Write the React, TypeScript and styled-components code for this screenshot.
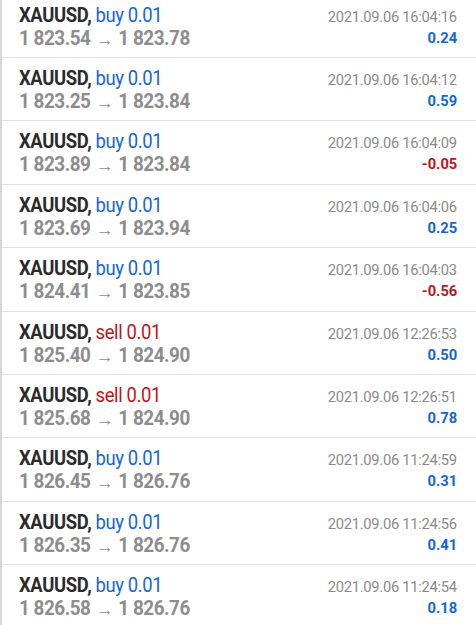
import styled, { createGlobalStyle } from 'styled-components';

const GlobalStyle = createGlobalStyle`
    html, body {
        margin: 0;
        padding: 0;
        background: #ffffff;
        overflow: hidden;
    }
`;

interface Trade {
    side: 'buy' | 'sell';
    open: string;
    close: string;
    time: string;
    profit: string;
}

const trades: Trade[] = [
    { side: 'buy', open: '1 823.54', close: '1 823.78', time: '2021.09.06 16:04:16', profit: '0.24' },
    { side: 'buy', open: '1 823.25', close: '1 823.84', time: '2021.09.06 16:04:12', profit: '0.59' },
    { side: 'buy', open: '1 823.89', close: '1 823.84', time: '2021.09.06 16:04:09', profit: '-0.05' },
    { side: 'buy', open: '1 823.69', close: '1 823.94', time: '2021.09.06 16:04:06', profit: '0.25' },
    { side: 'buy', open: '1 824.41', close: '1 823.85', time: '2021.09.06 16:04:03', profit: '-0.56' },
    { side: 'sell', open: '1 825.40', close: '1 824.90', time: '2021.09.06 12:26:53', profit: '0.50' },
    { side: 'sell', open: '1 825.68', close: '1 824.90', time: '2021.09.06 12:26:51', profit: '0.78' },
    { side: 'buy', open: '1 826.45', close: '1 826.76', time: '2021.09.06 11:24:59', profit: '0.31' },
    { side: 'buy', open: '1 826.35', close: '1 826.76', time: '2021.09.06 11:24:56', profit: '0.41' },
    { side: 'buy', open: '1 826.58', close: '1 826.76', time: '2021.09.06 11:24:54', profit: '0.18' },
];

const BLUE = '#1565d8';
const RED = '#c0141c';

const Screen = styled.div`
    width: 476px;
    height: 625px;
    overflow: hidden;
    border-left: 2px solid #d6d6d6;
    box-sizing: border-box;
    font-family: Roboto, 'Liberation Sans', sans-serif;
`;

const List = styled.div`
    margin-top: -5.4px;
`;

const Row = styled.div`
    height: 63.4px;
    box-sizing: border-box;
    border-bottom: 1.5px solid #e2e2e2;
    display: flex;
    justify-content: space-between;
    padding: 9px 19px 0 17px;
`;

const Left = styled.div`
    display: flex;
    flex-direction: column;
    align-items: flex-start;
`;

const Right = styled.div`
    display: flex;
    flex-direction: column;
    align-items: flex-end;
    padding-top: 4px;
`;

// the app uses a condensed face; squeeze Roboto to the same widths
const Title = styled.div`
    font-size: 20px;
    line-height: 23px;
    font-weight: 700;
    color: #2b2b2b;
    letter-spacing: -0.4px;
    white-space: nowrap;
    transform: scaleX(0.92);
    transform-origin: left center;
`;

const Side = styled.span<{ sell: boolean }>`
    font-weight: 400;
    color: ${props => props.sell ? RED : BLUE};
`;

const Prices = styled.div`
    font-size: 20px;
    line-height: 23px;
    font-weight: 700;
    color: #8d8d8d;
    letter-spacing: -0.5px;
    white-space: nowrap;
    transform: scaleX(0.945);
    transform-origin: left center;
`;

const Arrow = styled.span`
    display: inline-block;
    font-size: 19px;
    font-weight: 400;
    color: #8d8d8d;
    margin: 0 1px;
    transform: translateY(1px);
`;

const Time = styled.div`
    font-size: 15.5px;
    line-height: 19px;
    color: #8a8a8a;
    letter-spacing: -0.3px;
    white-space: nowrap;
    transform: scaleX(0.95);
    transform-origin: right center;
`;

const Profit = styled.div<{ negative: boolean }>`
    font-size: 15.5px;
    line-height: 23px;
    font-weight: 700;
    color: ${props => props.negative ? RED : BLUE};
    transform: scaleX(0.95);
    transform-origin: right center;
`;

export default function App() {
    return (
        <Screen>
            <GlobalStyle />
            <List>
                {trades.map((t, i) => (
                    <Row key={i}>
                        <Left>
                            <Title>XAUUSD, <Side sell={t.side === 'sell'}>{t.side} 0.01</Side></Title>
                            <Prices>{t.open} <Arrow>→</Arrow> {t.close}</Prices>
                        </Left>
                        <Right>
                            <Time>{t.time}</Time>
                            <Profit negative={t.profit.startsWith('-')}>{t.profit}</Profit>
                        </Right>
                    </Row>
                ))}
            </List>
        </Screen>
    );
}
